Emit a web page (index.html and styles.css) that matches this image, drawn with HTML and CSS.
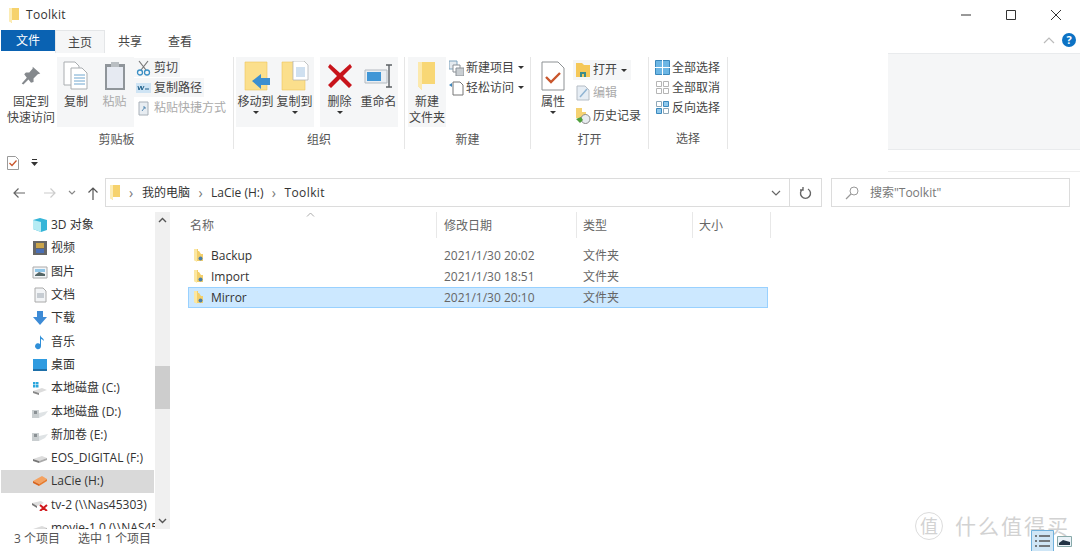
FILE: index.html
```html
<!DOCTYPE html>
<html lang="zh-CN">
<head>
  <meta charset="UTF-8" />
  <title>Toolkit</title>
  <link rel="stylesheet" href="styles.css">
</head>
<body>
  <svg class="defs" width="0" height="0">
    <symbol id="folder" viewBox="0 0 10 15">
      <path d="M0 0h10v12H3v3l-3-2z" fill="#f6d26c"/>
      <path d="M0 0h3v15l-3-2z" fill="#fcecb4"/>
    </symbol>
    <symbol id="smallfolder" viewBox="0 0 10 14">
      <path d="M0 0h4v2h1l2 3h2v7H2l-2-1z" fill="#f3cf6b"/>
      <path d="M0 0h3v13l-3-2z" fill="#fbe7a3"/>
      <circle cx="6.500" cy="9.500" r="2" fill="#4b7fa8"/>
    </symbol>
    <symbol id="disk" viewBox="0 0 16 12">
      <path d="M1 7l9-3 5 2-8 3z" fill="#dcdcdc"/>
      <path d="M1 7l6 2v2L1 9z" fill="#777"/>
      <path d="M7 9l8-3v2l-8 3z" fill="#aaa"/>
    </symbol>
    <symbol id="greydisk" viewBox="0 0 16 12">
      <path d="M0 4h7v8H0z" fill="#c9ced0"/>
      <path d="M2 5h3v3H2z" fill="#8a9094"/>
      <path d="M7 7l9-2-3 4-6 3z" fill="#dfe3e5"/>
    </symbol>
  </svg>

  <div class="titlebar">
    <svg class="title-icon" width="10" height="15"><use href="#folder"/></svg>
    <span class="title-text">Toolkit</span>
    <div class="winbtns">
      <svg width="12" height="12" viewBox="0 0 12 12"><path d="M1 6h10" stroke="#333" stroke-width="1"/></svg>
      <svg width="12" height="12" viewBox="0 0 12 12"><path d="M1.500 1.500h9v9h-9z" fill="none" stroke="#333"/></svg>
      <svg width="12" height="12" viewBox="0 0 12 12"><path d="M1 1l10 10M11 1L1 11" stroke="#333"/></svg>
    </div>
  </div>

  <div class="tabs">
    <div class="tab tab-file">文件</div>
    <div class="tab tab-active">主页</div>
    <div class="tab">共享</div>
    <div class="tab">查看</div>
    <div class="tabs-right">
      <svg width="12" height="8" viewBox="0 0 12 8"><path d="M1 7l5-5 5 5" fill="none" stroke="#bbb" stroke-width="1.200"/></svg>
      <span class="help">?</span>
    </div>
  </div>

  <div class="ribbon">
    <div class="tools">
      <div class="group g1">
        <div class="group-body">
          <div class="big w-pin">
            <svg width="22" height="30" viewBox="0 0 26 26"><path d="M15 2l9 8-3 1-5 5 0 4-3 1-3-4-6 6-2-1 6-7-3-4 2-2 4 0 4-5z" fill="#85898d"/></svg>
            <span>固定到<br>快速访问</span>
          </div>
          <div class="big w-copy hot">
            <svg width="26" height="30" viewBox="0 0 26 30"><path d="M1 1h11l4 4v19H1z" fill="#fff" stroke="#a9adb0"/><path d="M8 7h11l5 5v16H8z" fill="#fff" stroke="#a9adb0"/><path d="M11 14h11M11 17h11M11 20h11M11 23h11" stroke="#6fa6cf"/></svg>
            <span>复制</span>
          </div>
          <div class="big w-paste hot dim">
            <svg width="22" height="30" viewBox="0 0 22 30"><path d="M1 3h20v26H1z" fill="#8f959a"/><path d="M3 6h16v21H3z" fill="#e6eaf2"/><path d="M7 1h8v5H7z" fill="#b9bec2"/></svg>
            <span>粘贴</span>
          </div>
          <div class="smalls s-clip">
            <div class="small hot">
              <svg width="15" height="16" viewBox="0 0 15 16"><path d="M3 1l7 9M12 1L5 10" stroke="#777" stroke-width="1.200"/><circle cx="4" cy="12.500" r="2.500" fill="none" stroke="#3b8fc4" stroke-width="1.300"/><circle cx="11" cy="12.500" r="2.500" fill="none" stroke="#3b8fc4" stroke-width="1.300"/></svg>
              <span>剪切</span>
            </div>
            <div class="small hot">
              <svg width="15" height="16" viewBox="0 0 15 16"><path d="M0 3h15v10H0z" fill="#cfe4f4"/><path d="M2 6l1 4 2-4 1 4 2-4M9 9h4" fill="none" stroke="#1d5f8a"/></svg>
              <span>复制路径</span>
            </div>
            <div class="small dim">
              <svg width="15" height="16" viewBox="0 0 15 16"><path d="M3 2h9v13H3z" fill="#e8edf2" stroke="#a8b0b8"/><path d="M6 11l3-4M7 7h2v2" fill="none" stroke="#5b8db5"/></svg>
              <span>粘贴快捷方式</span>
            </div>
          </div>
        </div>
        <div class="group-label">剪贴板</div>
      </div>

      <div class="group g2">
        <div class="group-body">
          <div class="hotset set-move">
            <div class="big w-org">
              <svg width="28" height="30" viewBox="0 0 28 30"><path d="M3 1h22v28H3z" fill="#fbdf8c" stroke="#efc65c" stroke-width="0.600"/><path d="M10 20l9-7v4h9v7h-9v4z" fill="#3c8fd0"/></svg>
              <span>移动到</span>
              <i class="caret"></i>
            </div>
            <div class="big w-org">
              <svg width="28" height="30" viewBox="0 0 28 30"><path d="M1 1h23v28H1z" fill="#fbdf8c" stroke="#efc65c" stroke-width="0.600"/><path d="M12 0h11l4 4v15H12z" fill="#fff" stroke="#a9adb0" stroke-width="0.700"/><path d="M15 6h9v10h-9z" fill="#cfe0f0"/></svg>
              <span>复制到</span>
              <i class="caret"></i>
            </div>
          </div>
          <div class="hotset set-del">
            <div class="big w-org">
              <svg width="26" height="30" viewBox="0 0 26 26"><path d="M3 1l10 9 10-9 2 3-9 9 9 9-3 3-9-9-9 9-3-3 9-9-9-9z" fill="#c8141b"/></svg>
              <span>删除</span>
              <i class="caret"></i>
            </div>
            <div class="big w-org">
              <svg width="30" height="30" viewBox="0 0 30 28"><path d="M1 8h22v13H1z" fill="#e9eef3" stroke="#b4bbc1"/><path d="M3 10h14v9H3z" fill="#3f96d6"/><path d="M22 3h6M25 3v22M22 25h6" fill="none" stroke="#5c6166" stroke-width="1.400"/></svg>
              <span>重命名</span>
            </div>
          </div>
        </div>
        <div class="group-label">组织</div>
      </div>

      <div class="group g3">
        <div class="group-body">
          <div class="big w-new hot">
            <svg width="20" height="30" viewBox="0 0 20 30"><path d="M1 1h17v22H5v6l-4-4z" fill="#f8d775"/><path d="M1 1h4v28l-4-4z" fill="#fce9ad"/></svg>
            <span>新建<br>文件夹</span>
          </div>
          <div class="smalls s-new">
            <div class="small">
              <svg width="15" height="16" viewBox="0 0 15 16"><path d="M0 1h8v8H0z" fill="#e4eaef" stroke="#7fa4bf"/><path d="M4 5h7v7H4z" fill="#fff" stroke="#8a9096"/><path d="M7 8h8v8H7z" fill="#c9ced2" stroke="#8a9096"/></svg>
              <span>新建项目</span><i class="caret"></i>
            </div>
            <div class="small">
              <svg width="15" height="16" viewBox="0 0 15 16"><path d="M4 2h7l3 3v10H4z" fill="#fff" stroke="#777"/><path d="M0 5l3-2v4z" fill="#3f86bb"/></svg>
              <span>轻松访问</span><i class="caret"></i>
            </div>
          </div>
        </div>
        <div class="group-label">新建</div>
      </div>

      <div class="group g4">
        <div class="group-body">
          <div class="big w-prop">
            <svg width="24" height="30" viewBox="0 0 24 30"><path d="M1 1h16l6 6v22H1z" fill="#fff" stroke="#8d9194"/><path d="M5 16l5 5 9-9" fill="none" stroke="#c9562c" stroke-width="2.400"/></svg>
            <span>属性</span>
            <i class="caret"></i>
          </div>
          <div class="smalls s-open">
            <div class="small hot">
              <svg width="16" height="16" viewBox="0 0 16 16"><path d="M1 1h6l2 2h6v12H1z" fill="#f5c858"/><path d="M5 10h6v5H9v-3H7v3H5z" fill="#3c8c8c"/></svg>
              <span>打开</span><i class="caret"></i>
            </div>
            <div class="small dim">
              <svg width="16" height="16" viewBox="0 0 16 16"><path d="M2 1h8l4 4v10H2z" fill="#e6edf4" stroke="#b5bdc5"/><path d="M5 12l7-8" stroke="#90b4d2" stroke-width="1.500"/></svg>
              <span>编辑</span>
            </div>
            <div class="small">
              <svg width="16" height="16" viewBox="0 0 16 16"><path d="M1 0h6v4h4v6H1z" fill="#f5d272"/><circle cx="10.500" cy="11" r="4.500" fill="#e8ecef" stroke="#888"/><path d="M1 11l4 4 3-3-2-3z" fill="#4fa03c"/></svg>
              <span>历史记录</span>
            </div>
          </div>
        </div>
        <div class="group-label">打开</div>
      </div>

      <div class="group g5">
        <div class="group-body">
          <div class="smalls s-sel">
            <div class="small">
              <svg width="15" height="15" viewBox="0 0 15 15"><path d="M.5.500h14v14H.5z" fill="#6cb6e4" stroke="#3b88bc"/><path d="M7.500 0v15M0 7.500h15" stroke="#fff"/></svg>
              <span>全部选择</span>
            </div>
            <div class="small">
              <svg width="15" height="15" viewBox="0 0 15 15"><path d="M1.500 1.500h5v5h-5zM8.500 1.500h5v5h-5zM1.500 8.500h5v5h-5zM8.500 8.500h5v5h-5z" fill="#fff" stroke="#b5b5b5"/></svg>
              <span>全部取消</span>
            </div>
            <div class="small">
              <svg width="15" height="15" viewBox="0 0 15 15"><path d="M1.500 8.500h5v5h-5zM8.500 1.500h5v5h-5z" fill="#8fc8ec" stroke="#3b88bc"/><path d="M1.500 1.500h5v5h-5zM8.500 8.500h5v5h-5z" fill="#fff" stroke="#8fa8b8"/></svg>
              <span>反向选择</span>
            </div>
          </div>
        </div>
        <div class="group-label">选择</div>
      </div>
    </div>
    <div class="ribbon-blank"></div>
  </div>

  <div class="qat">
    <svg width="12" height="14" viewBox="0 0 12 14"><path d="M.5.500h8l3 3v10H.5z" fill="#fff" stroke="#9a9a9a"/><path d="M2.500 7l2.500 2.500L9.500 4.500" fill="none" stroke="#c9562c" stroke-width="1.300"/></svg>
    <svg class="qat-more" width="7" height="7" viewBox="0 0 7 7"><path d="M1 0h5v1H1zM0 3h7L3.500 7z" fill="#333"/></svg>
  </div>

  <div class="navbar">
    <div class="nav-arrows">
      <svg width="14" height="12" viewBox="0 0 14 12"><path d="M13 6H2M6.500 1.500L2 6l4.500 4.500" fill="none" stroke="#666" stroke-width="1.200"/></svg>
      <svg width="14" height="12" viewBox="0 0 14 12"><path d="M1 6h11M7.500 1.500L12 6l-4.500 4.500" fill="none" stroke="#ccc" stroke-width="1.200"/></svg>
      <svg width="8" height="6" viewBox="0 0 8 6"><path d="M1 1l3 3 3-3" fill="none" stroke="#888" stroke-width="1.200"/></svg>
      <svg width="12" height="14" viewBox="0 0 12 14"><path d="M6 14V2M1.500 6.500L6 2l4.500 4.500" fill="none" stroke="#555" stroke-width="1.200"/></svg>
    </div>
    <div class="address">
      <svg width="10" height="15"><use href="#folder"/></svg>
      <b class="crumb-sep">›</b><span>我的电脑</span>
      <b class="crumb-sep">›</b><span>LaCie (H:)</span>
      <b class="crumb-sep">›</b><span class="crumb-last">Toolkit</span>
      <svg class="addr-down" width="10" height="6" viewBox="0 0 10 6"><path d="M1 1l4 4 4-4" fill="none" stroke="#666" stroke-width="1.200"/></svg>
    </div>
    <div class="refresh">
      <svg width="13" height="14" viewBox="0 0 13 14"><path d="M4 3a5 5 0 1 0 5 0M4 1v3H1" fill="none" stroke="#666" stroke-width="1.400"/></svg>
    </div>
    <div class="search">
      <svg width="14" height="14" viewBox="0 0 14 14"><circle cx="9" cy="5" r="4" fill="none" stroke="#999"/><path d="M6 8l-5 5" stroke="#999" stroke-width="1.200"/></svg>
      <span>搜索"Toolkit"</span>
    </div>
  </div>

  <div class="main">
    <div class="tree">
      <div class="tree-list">
        <div class="tree-item"><svg width="16" height="16" viewBox="0 0 16 16"><path d="M8 1l7 2v10l-6 2-8-3V3z" fill="#35b5d8"/><path d="M1 3l8 2v10l-8-3z" fill="#b6ecf4"/></svg>3D 对象</div>
        <div class="tree-item"><svg width="16" height="16" viewBox="0 0 16 16"><path d="M1 1h14v14H1z" fill="#666"/><path d="M4 3h8v5H4z" fill="#caa44a"/><path d="M4 9h8v4H4z" fill="#4a6fb5"/></svg>视频</div>
        <div class="tree-item"><svg width="16" height="14" viewBox="0 0 16 14"><path d="M1 2h14v11H1z" fill="#f2f5f8" stroke="#aaa"/><path d="M3 10l4-3 6 2v2H3z" fill="#566"/><path d="M3 4h10v3H3z" fill="#8fc6e8"/></svg>图片</div>
        <div class="tree-item"><svg width="16" height="16" viewBox="0 0 16 16"><path d="M3 1h8l3 3v11H3z" fill="#f2f4f6" stroke="#aaa"/><path d="M5 6h7v5H5z" fill="#c6ccd2"/></svg>文档</div>
        <div class="tree-item"><svg width="16" height="16" viewBox="0 0 16 16"><path d="M5 1h6v6h4l-7 8-7-8h4z" fill="#3d8bd6"/></svg>下载</div>
        <div class="tree-item"><svg width="16" height="16" viewBox="0 0 16 16"><path d="M8 1c1 3 4 3 4 6-1-1-2-2-3-2v7a3 3 0 1 1-1-2z" fill="#2f8fd8"/></svg>音乐</div>
        <div class="tree-item"><svg width="16" height="14" viewBox="0 0 16 14"><path d="M1 1h14v11H1z" fill="#2f9be0"/><path d="M1 11h14v2H1z" fill="#1e6fa8"/></svg>桌面</div>
        <div class="tree-item"><svg width="16" height="14" viewBox="0 0 16 14"><path d="M1 1h2.500v2.500H1zM4 1h2.500v2.500H4zM1 4h2.500v2.500H1zM4 4h2.500v2.500H4z" fill="#2aa6dc"/><path d="M1 10l9-3 5 2-8 3z" fill="#dcdcdc"/><path d="M1 10l6 2v2l-6-2z" fill="#888"/></svg>本地磁盘 (C:)</div>
        <div class="tree-item"><svg width="16" height="12"><use href="#greydisk"/></svg>本地磁盘 (D:)</div>
        <div class="tree-item"><svg width="16" height="12"><use href="#greydisk"/></svg>新加卷 (E:)</div>
        <div class="tree-item"><svg width="16" height="12"><use href="#disk"/></svg>EOS_DIGITAL (F:)</div>
        <div class="tree-item tree-current"><svg width="16" height="12" viewBox="0 0 16 12"><path d="M1 6l9-5 5 3-8 5z" fill="#f4a261"/><path d="M1 6l6 3v2L1 8z" fill="#d9641e"/><path d="M7 9l8-5v2l-8 5z" fill="#e87b2c"/></svg>LaCie (H:)</div>
        <div class="tree-item"><svg width="16" height="12" viewBox="0 0 16 12"><path d="M0 4l9-2 3 2-7 3z" fill="#ddd"/><path d="M0 4l5 3v2L0 6z" fill="#777"/><path d="M8 6l7 6M15 6l-7 6" stroke="#d0181c" stroke-width="2"/></svg>tv-2 (\\Nas45303)</div>
        <div class="tree-item"><svg width="16" height="12"><use href="#disk"/></svg>movie-1.0 (\\NAS45303)</div>
      </div>
      <div class="scrollbar">
        <svg width="9" height="6" viewBox="0 0 9 6"><path d="M1 5l3.500-3.500L8 5" fill="none" stroke="#555" stroke-width="1.400"/></svg>
        <div class="thumb"></div>
        <svg width="9" height="6" viewBox="0 0 9 6"><path d="M1 1l3.500 3.500L8 1" fill="none" stroke="#555" stroke-width="1.400"/></svg>
      </div>
    </div>

    <div class="files">
      <div class="file-head">
        <div class="c-name">名称<svg class="sort" width="9" height="5" viewBox="0 0 9 5"><path d="M1 4.500l3.500-3.500L8 4.500" fill="none" stroke="#aaa"/></svg></div>
        <div class="c-date">修改日期</div>
        <div class="c-type">类型</div>
        <div class="c-size">大小</div>
      </div>
      <div class="file-row">
        <div class="c-name"><svg width="10" height="14"><use href="#smallfolder"/></svg><em>Backup</em></div>
        <div class="c-date">2021/1/30 20:02</div>
        <div class="c-type">文件夹</div>
      </div>
      <div class="file-row">
        <div class="c-name"><svg width="10" height="14"><use href="#smallfolder"/></svg><em>Import</em></div>
        <div class="c-date">2021/1/30 18:51</div>
        <div class="c-type">文件夹</div>
      </div>
      <div class="file-row selected">
        <div class="c-name"><svg width="10" height="14"><use href="#smallfolder"/></svg><em>Mirror</em></div>
        <div class="c-date">2021/1/30 20:10</div>
        <div class="c-type">文件夹</div>
      </div>
    </div>
  </div>

  <div class="status">
    <span>3 个项目</span>
    <span>选中 1 个项目</span>
    <div class="views">
      <svg width="23" height="23" viewBox="0 0 23 23"><path d="M.5.500h22v22H.5z" fill="#cfe6f6" stroke="#6fb1dc"/><path d="M4 6h2M8 6h11M4 11h2M8 11h11M4 16h2M8 16h11" stroke="#555" stroke-width="1.300"/></svg>
      <svg width="15" height="11" viewBox="0 0 15 11"><path d="M.5.500h14v10H.5z" fill="#eaf2f8" stroke="#8aa"/><path d="M2 7l4-3 7 2v3H2z" fill="#234"/></svg>
    </div>
  </div>

  <div class="watermark">
    <span class="wm-badge">值</span>
    <span class="wm-text">什么值得买</span>
  </div>
</body>
</html>
```

FILE: styles.css
```css
* {
  box-sizing: border-box;
}
html, body {
  margin: 0;
  height: 551px;
  overflow: hidden;
}
body {
  position: relative;
  width: 1080px;
  background: #fff;
  color: #444;
  font-family: "Open Sans", "Noto Sans CJK SC", sans-serif;
  font-size: 12px;
  line-height: 16px;
}
svg {
  flex: none;
  display: block;
}
.defs {
  position: absolute;
}

/* title bar */
.titlebar {
  height: 30px;
  display: flex;
  align-items: center;
  padding-left: 9px;
}
.title-text {
  margin-left: 7px;
  color: #333;
  letter-spacing: 0.3px;
}
.winbtns {
  margin-left: auto;
  display: flex;
  gap: 33px;
  padding-right: 18px;
}

/* tabs */
.tabs {
  height: 23px;
  display: flex;
  padding-left: 1px;
}
.tab {
  width: 50px;
  text-align: center;
  line-height: 23px;
  color: #444;
}
.tab-file {
  width: 54px;
  height: 21px;
  line-height: 21px;
  background: #0a62b2;
  color: #fff;
}
.tab-active {
  background: #f5f6f7;
  border: 1px solid #e4e6e8;
  border-bottom: 0;
}
.tabs-right {
  margin-left: auto;
  display: flex;
  align-items: center;
  gap: 7px;
  padding: 0 4px 3px 0;
}
.help {
  width: 14px;
  height: 14px;
  border-radius: 50%;
  background: #0c72c4;
  color: #fff;
  font-weight: 700;
  font-size: 11px;
  line-height: 14px;
  text-align: center;
}

/* ribbon */
.ribbon {
  height: 97px;
  display: flex;
}
.tools {
  width: 888px;
  display: flex;
  padding-top: 4px;
}
.ribbon-blank {
  flex: 1;
  background: #f5f6f7;
  border-top: 1px solid #e9ebed;
  border-bottom: 1px solid #e9ebed;
}
.group {
  display: flex;
  flex-direction: column;
  border-right: 1px solid #e6e6e6;
  height: 92px;
}
.g1 { width: 234px; }
.g2 { width: 171px; }
.g3 { width: 126px; }
.g4 { width: 118px; }
.g5 { width: 79px; }
.g1 .group-body { padding-left: 5px; }
.g2 .group-body { padding-left: 2px; }
.g3 .group-body { padding-left: 3px; }
.g4 .group-body { padding-left: 5px; }
.g5 .group-body { padding-left: 4px; }
.group-body {
  height: 71px;
  display: flex;
}
.group-label {
  flex: 1;
  text-align: center;
  line-height: 20px;
  padding-top: 3px;
  color: #555;
}
.big {
  position: relative;
  display: flex;
  flex-direction: column;
  align-items: center;
  text-align: center;
  height: 70px;
  padding-top: 4px;
  line-height: 16px;
}
.big svg {
  height: 30px;
  margin-bottom: 3px;
}
.w-pin { width: 52px; }
.w-copy { width: 38px; }
.w-paste { width: 39px; }
.w-org { width: 39px; }
.w-new { width: 38px; }
.w-prop { width: 34px; margin-right: 3px; }
.hot, .hotset {
  background: #f5f6f7;
}
.dim {
  color: #aaa;
}
.hotset {
  display: flex;
  height: 70px;
}
.set-del {
  margin-left: 6px;
}
.caret {
  display: inline-block;
  width: 0;
  height: 0;
  border: 3px solid transparent;
  border-top: 3px solid #333;
  border-bottom: 0;
}
.big .caret {
  margin-top: 1px;
}
.smalls {
  display: flex;
  flex-direction: column;
  gap: 1px;
}
.small {
  height: 19px;
  display: flex;
  align-items: center;
  gap: 2px;
  padding: 0 2px;
  align-self: flex-start;
  white-space: nowrap;
}
.small .caret {
  margin-left: 2px;
}
.s-clip {
  padding-top: 1px;
}
.s-clip .small {
  gap: 3px;
}
.s-new {
  margin-left: 1px;
  padding-top: 1px;
}
.s-open {
  gap: 3px;
  padding-top: 3px;
}
.s-open .small {
  height: 20px;
}
.s-open .small .caret {
  margin-right: 2px;
}
.s-sel {
  padding-top: 1px;
}

/* quick access */
.qat {
  position: relative;
  height: 25px;
  display: flex;
  align-items: center;
  padding-left: 7px;
  gap: 12px;
}
.qat::after {
  content: "";
  position: absolute;
  left: 888px;
  right: 0;
  bottom: 3px;
  height: 1px;
  background: #eee;
}

/* address bar */
.navbar {
  height: 29px;
  margin-top: 3px;
  display: flex;
}
.nav-arrows {
  width: 105px;
  display: flex;
  align-items: center;
  padding-left: 12px;
}
.nav-arrows svg:nth-child(2) {
  margin-left: 17px;
}
.nav-arrows svg:nth-child(3) {
  margin-left: 11px;
}
.nav-arrows svg:nth-child(4) {
  margin-left: 11px;
}
.address {
  width: 685px;
  display: flex;
  align-items: center;
  padding-left: 4px;
  border: 1px solid #dcdcdc;
  color: #333;
}
.crumb-sep {
  font-weight: 400;
  font-size: 14px;
  color: #777;
  width: 22px;
  text-align: center;
}
.address span + .crumb-sep {
  width: 21px;
}
.crumb-last {
  letter-spacing: 0.4px;
}
.addr-down {
  margin-left: auto;
  margin-right: 8px;
}
.refresh {
  width: 32px;
  display: flex;
  align-items: center;
  justify-content: center;
  border: 1px solid #dcdcdc;
  border-left: 0;
}
.search {
  width: 239px;
  margin-left: 9px;
  display: flex;
  align-items: center;
  gap: 11px;
  padding-left: 13px;
  border: 1px solid #dcdcdc;
  color: #777;
}

/* main */
.main {
  height: 319px;
  margin-top: 4px;
  display: flex;
}
.tree {
  width: 170px;
  display: flex;
  height: 317px;
  margin-top: 1px;
}
.tree-list {
  width: 155px;
  overflow: hidden;
  padding-top: 1.500px;
}
.tree-item {
  height: 23.300px;
  margin: 0 1px;
  padding-left: 31px;
  display: flex;
  align-items: center;
  gap: 3px;
  white-space: nowrap;
  color: #333;
}
.tree-current {
  background: #d9d9d9;
}
.scrollbar {
  width: 15px;
  background: #f0f0f0;
  position: relative;
  display: flex;
  flex-direction: column;
  align-items: center;
  justify-content: space-between;
  padding: 5px 0;
}
.thumb {
  position: absolute;
  top: 154px;
  left: 0;
  width: 15px;
  height: 43px;
  background: #cdcdcd;
}
.files {
  flex: 1;
  padding-left: 18px;
}
.file-head {
  height: 34px;
  display: flex;
  align-items: flex-start;
  color: #666;
}
.file-head > div {
  position: relative;
  height: 26px;
  margin-top: 1px;
  line-height: 28px;
  border-right: 1px solid #e8e8e8;
  padding-left: 2px;
}
.file-head .c-date {
  width: 140px;
  padding-left: 7px;
}
.file-head .c-type,
.file-head .c-size {
  padding-left: 6px;
}
.sort {
  position: absolute;
  top: 0;
  left: 118px;
}
.c-name { width: 249px; }
.c-date { width: 139px; }
.c-type { width: 116px; }
.c-size { width: 78px; }
.file-row {
  width: 580px;
  height: 21px;
  display: flex;
  align-items: center;
  border: 1px solid transparent;
  color: #666;
}
.file-row .c-name {
  display: flex;
  align-items: center;
  gap: 7px;
  padding-left: 5px;
}
.file-row .c-date,
.file-row .c-type {
  padding-left: 6px;
}
.file-row em {
  font-style: normal;
  color: #333;
}
.selected {
  background: #cce8ff;
  border-color: #99d1ff;
}

/* status bar */
.status {
  height: 21px;
  display: flex;
  align-items: center;
  gap: 18px;
  padding: 0 0 4px 14px;
  color: #555;
}
.views {
  position: relative;
  z-index: 1;
  margin-left: auto;
  display: flex;
  align-items: center;
  gap: 3px;
  padding-right: 8px;
  height: 21px;
  margin-bottom: -6px;
}

/* site mark over the screenshot */
.watermark {
  position: absolute;
  left: 915px;
  top: 512px;
  display: flex;
  align-items: center;
  gap: 12px;
  color: #d2d2d2;
  white-space: nowrap;
}
.wm-badge {
  width: 28px;
  height: 28px;
  border: 1px solid #dcdcdc;
  border-radius: 50%;
  font-size: 18px;
  line-height: 26px;
  text-align: center;
}
.wm-text {
  font-size: 21px;
  line-height: 28px;
  letter-spacing: 2px;
}
```
